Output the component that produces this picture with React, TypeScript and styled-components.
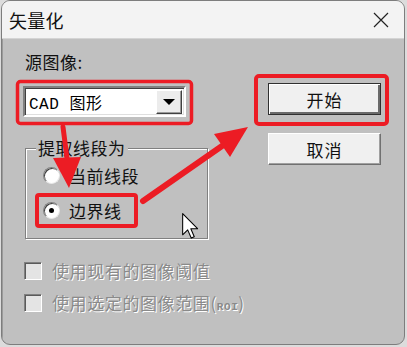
import React from "react";
import styled, { createGlobalStyle } from "styled-components";

const Global = createGlobalStyle`
  html, body { margin: 0; padding: 0; background: #dcdcdc; }
  body { font-family: "Noto Sans CJK SC", "Noto Sans", sans-serif; }
  * { box-sizing: border-box; }
`;

const Page = styled.div`
  position: relative;
  width: 407px;
  height: 347px;
  padding: 0 2px 2px 1px;
`;

const Window = styled.div`
  width: 404px;
  height: 345px;
  border: 1px solid #7d7d7d;
  border-radius: 9px;
  overflow: hidden;
  display: flex;
  flex-direction: column;
  background: #c0c0c0;
`;

const TitleBar = styled.div`
  height: 38px;
  flex: 0 0 38px;
  background: #f3f3f3;
  border-bottom: 1px solid #d4d4d4;
  display: flex;
  align-items: center;
  justify-content: space-between;
  padding: 0 15px 0 7px;
`;

const Title = styled.span`
  font-size: 18px;
  color: #111;
  letter-spacing: 0.3px;
  line-height: 20px;
`;

const CloseIcon = styled.svg`
  width: 16px;
  height: 16px;
  display: block;
`;

const Body = styled.div`
  flex: 1;
  display: flex;
  flex-direction: column;
  padding: 13px 0 0 20px;
  border-left: 1px solid #9a9a9a;
`;

const TopRow = styled.div`
  display: flex;
`;

const LeftCol = styled.div`
  width: 185px;
  display: flex;
  flex-direction: column;
`;

const FieldLabel = styled.div`
  font-size: 17px;
  line-height: 20px;
  color: #111;
  padding-left: 2px;
  letter-spacing: 0.5px;
`;

const Combo = styled.div`
  margin-top: 14px;
  width: 163px;
  height: 31px;
  background: #fff;
  border: 2px solid;
  border-color: #808080 #ffffff #ffffff #808080;
  box-shadow: inset 1px 1px 0 #404040, inset -1px -1px 0 #dfdfdf;
  display: flex;
  align-items: center;
  justify-content: space-between;
  padding: 0 2px 0 4px;
`;

const ComboText = styled.span`
  font-family: "Liberation Mono", "Noto Sans CJK SC", monospace;
  font-size: 16px;
  color: #000;
  letter-spacing: 0.5px;
`;

const ComboButton = styled.div`
  width: 26px;
  height: 24px;
  background: #ececec;
  border: 1px solid;
  border-color: #ffffff #404040 #404040 #ffffff;
  box-shadow: inset -1px -1px 0 #9a9a9a;
  display: flex;
  align-items: center;
  justify-content: center;
`;

const Caret = styled.div`
  width: 0;
  height: 0;
  border-left: 6px solid transparent;
  border-right: 6px solid transparent;
  border-top: 6px solid #000;
`;

const GroupBox = styled.div`
  position: relative;
  margin: 31px 0 0 2px;
  width: 183px;
  height: 91px;
  border: 1px solid #808080;
  box-shadow: inset 1px 1px 0 #ffffff, 1px 1px 0 #ffffff;
  padding: 11px 0 0 17px;
  display: flex;
  flex-direction: column;
  gap: 5px;
`;

const GroupLabel = styled.span`
  position: absolute;
  top: -12px;
  left: 10px;
  padding: 0 2px;
  background: #c0c0c0;
  font-size: 17px;
  line-height: 22px;
  color: #111;
  letter-spacing: 0.5px;
`;

const RadioRow = styled.div`
  display: flex;
  align-items: center;
  gap: 9px;
  height: 30px;
`;

const RadioCircle = styled.div<{ $checked?: boolean }>`
  width: 17px;
  height: 17px;
  border-radius: 50%;
  background: #fff;
  border: 1px solid;
  border-color: #808080 #e8e8e8 #e8e8e8 #808080;
  box-shadow: inset 1px 1px 0 #404040;
  display: flex;
  align-items: center;
  justify-content: center;
  &::after {
    content: "";
    width: 5px;
    height: 5px;
    border-radius: 50%;
    background: ${(p) => (p.$checked ? "#000" : "transparent")};
  }
`;

const RadioText = styled.span`
  font-size: 17px;
  color: #111;
  letter-spacing: 0.5px;
`;

const RightCol = styled.div`
  margin: 31px 0 0 60px;
  display: flex;
  flex-direction: column;
  gap: 18px;
`;

const Button = styled.div<{ $primary?: boolean }>`
  width: 113px;
  height: 32px;
  background: #f0f0f0;
  display: flex;
  align-items: center;
  justify-content: center;
  font-size: 17px;
  color: #111;
  letter-spacing: 1px;
  border: ${(p) => (p.$primary ? "1px solid #303030" : "1px solid")};
  border-color: ${(p) =>
    p.$primary ? "#303030" : "#ffffff #707070 #707070 #ffffff"};
  box-shadow: ${(p) =>
    p.$primary
      ? "inset 1px 1px 0 #ffffff, inset -2px -2px 0 #6a6a6a"
      : "inset -1px -1px 0 #a0a0a0"};
`;

const CheckList = styled.div`
  margin-top: 22px;
  display: flex;
  flex-direction: column;
  gap: 13px;
  padding-left: 1px;
`;

const CheckRow = styled.div`
  display: flex;
  align-items: center;
  gap: 10px;
  height: 19px;
`;

const CheckBox = styled.div`
  width: 18px;
  height: 18px;
  background: #e4e4e4;
  border: 1px solid;
  border-color: #808080 #ffffff #ffffff #808080;
  box-shadow: inset 1px 1px 0 #5a5a5a;
`;

const DisabledText = styled.span`
  font-size: 17px;
  color: #8a8a8a;
  text-shadow: 1px 1px 0 #ffffff;
  letter-spacing: 0.6px;
`;

const Small = styled.span`
  font-family: "Liberation Mono", monospace;
  font-size: 11px;
  font-weight: bold;
`;

const Overlay = styled.svg`
  position: absolute;
  left: 0;
  top: 0;
  width: 407px;
  height: 347px;
  pointer-events: none;
`;

const RED = "#ec1c24";

export default function App() {
  return (
    <>
      <Global />
      <Page>
        <Window>
          <TitleBar>
            <Title>矢量化</Title>
            <CloseIcon viewBox="0 0 16 16">
              <path d="M1 1 L15 15 M15 1 L1 15" stroke="#222" strokeWidth="1.2" fill="none" />
            </CloseIcon>
          </TitleBar>
          <Body>
            <TopRow>
              <LeftCol>
                <FieldLabel>源图像:</FieldLabel>
                <Combo>
                  <ComboText>CAD 图形</ComboText>
                  <ComboButton>
                    <Caret />
                  </ComboButton>
                </Combo>
                <GroupBox>
                  <GroupLabel>提取线段为</GroupLabel>
                  <RadioRow>
                    <RadioCircle />
                    <RadioText>当前线段</RadioText>
                  </RadioRow>
                  <RadioRow>
                    <RadioCircle $checked />
                    <RadioText>边界线</RadioText>
                  </RadioRow>
                </GroupBox>
              </LeftCol>
              <RightCol>
                <Button $primary>开始</Button>
                <Button>取消</Button>
              </RightCol>
            </TopRow>
            <CheckList>
              <CheckRow>
                <CheckBox />
                <DisabledText>使用现有的图像阈值</DisabledText>
              </CheckRow>
              <CheckRow>
                <CheckBox />
                <DisabledText>
                  使用选定的图像范围(<Small>ROI</Small>)
                </DisabledText>
              </CheckRow>
            </CheckList>
          </Body>
        </Window>
        <Overlay viewBox="0 0 407 347">
          <rect x="17.5" y="81.5" width="174" height="42" rx="3" fill="none" stroke={RED} strokeWidth="3.5" />
          <rect x="256" y="76" width="131" height="48" rx="3" fill="none" stroke={RED} strokeWidth="4" />
          <rect x="37" y="195" width="99" height="31" rx="2" fill="none" stroke={RED} strokeWidth="4" />
          <line x1="63" y1="127" x2="67.5" y2="162" stroke={RED} strokeWidth="5" strokeLinecap="round" />
          <polygon points="53,158 81,157 69,188" fill={RED} />
          <line x1="143" y1="201" x2="222" y2="146" stroke={RED} strokeWidth="6" strokeLinecap="round" />
          <polygon points="248,127 214,134 230,157" fill={RED} />
          <path
            transform="translate(182 213) scale(1.32)"
            d="M0.5 0.5 L0.5 16.5 L4.3 12.8 L7 19 L9.3 18 L6.7 11.9 L11.8 11.9 Z"
            fill="#fff"
            stroke="#000"
            strokeWidth="0.8"
            strokeLinejoin="round"
          />
        </Overlay>
      </Page>
    </>
  );
}
